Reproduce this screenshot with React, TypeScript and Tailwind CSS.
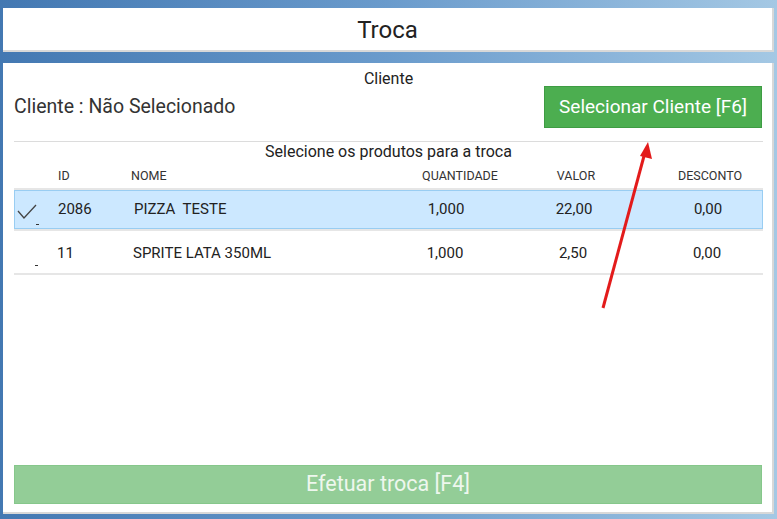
import React from "react";

type Item = { id: string; nome: string; qtd: string; valor: string; desc: string; selected?: boolean };

const items: Item[] = [
  { id: "2086", nome: "PIZZA\u00a0 TESTE", qtd: "1,000", valor: "22,00", desc: "0,00", selected: true },
  { id: "11", nome: "SPRITE LATA 350ML", qtd: "1,000", valor: "2,50", desc: "0,00" },
];

function Check() {
  return (
    <svg width="22" height="18" viewBox="0 0 22 18" className="absolute left-[2px] top-[13px]">
      <path d="M1 7 L7 14 L19 1" fill="none" stroke="#444" strokeWidth="1.3" />
    </svg>
  );
}

function Row({ item }: { item: Item }) {
  return (
    <div
      className={
        item.selected
          ? "relative flex h-[39px] items-center border border-[#99cdf2] bg-[#cce8ff] text-[15px] text-[#222]"
          : "relative flex h-[44px] items-center border-b-2 border-[#e6e6e6] pt-[2px] text-[15px] text-[#222]"
      }
    >
      {item.selected && <Check />}
      <span className={item.selected ? "absolute left-[21px] bottom-[3px] h-px w-[3px] bg-[#333]" : "absolute left-[21px] bottom-[7px] h-px w-[3px] bg-[#333]"} />
      <div className="w-[43px] shrink-0" />
      <div className="w-[76px] shrink-0">{item.id}</div>
      <div className="w-[274px] shrink-0">{item.nome}</div>
      <div className="w-[76px] shrink-0 text-center">{item.qtd}</div>
      <div className="w-[180px] shrink-0 text-center">{item.valor}</div>
      <div className="w-[88px] shrink-0 text-center">{item.desc}</div>
    </div>
  );
}

export default function App() {
  return (
    <div
      className="relative flex h-[519px] w-[777px] flex-col gap-[11px] overflow-hidden bg-gradient-to-r from-[#4378b2] via-[#6a9bcc] to-[#a4c8e4] px-[3px] pt-[8px] pb-[5px]"
      style={{ fontFamily: "Roboto, 'Liberation Sans', sans-serif" }}
    >
      <div className="flex h-[44px] items-center justify-center border-r-2 border-b-2 border-[#d8d8d8] bg-white pt-[2px] text-[24px] text-[#222]">
        Troca
      </div>

      <div className="flex flex-1 flex-col border-r-2 border-b-2 border-[#d8d8d8] bg-white pl-[11px] pr-[9px] pb-[8px] pt-[8px]">
        <div className="h-[15px] text-center text-[16px] leading-[15px] text-[#222]">Cliente</div>
        <div className="flex h-[42px] items-center justify-between">
          <span className="text-[19.5px] text-[#333]">Cliente : Não Selecionado</span>
          <button className="mr-[1px] h-[42px] w-[218px] border border-[#3e9c43] bg-[#4cae50] text-[19px] text-white">
            Selecionar Cliente [F6]
          </button>
        </div>

        <div className="mt-[13px] border-t border-[#dcdcdc]" />
        <div className="h-[20px] text-center text-[16px] leading-[20px] text-[#222]">
          Selecione os produtos para a troca
        </div>

        <div className="flex h-[28px] items-center border-b-2 border-[#e6e6e6] pt-[3px] text-[12.5px] text-[#333]">
          <div className="w-[44px] shrink-0" />
          <div className="w-[73px] shrink-0">ID</div>
          <div className="w-[290px] shrink-0">NOME</div>
          <div className="w-[78px] shrink-0 text-center">QUANTIDADE</div>
          <div className="w-[56px] shrink-0" />
          <div className="w-[42px] shrink-0 text-center">VALOR</div>
          <div className="w-[79px] shrink-0" />
          <div className="w-[68px] shrink-0 text-center">DESCONTO</div>
        </div>

        <Row item={items[0]} />
        <div className="h-[2px] bg-[#e6e6e6]" />
        <Row item={items[1]} />

        <button className="mt-auto h-[39px] w-[748px] border border-[#86c78b] bg-[#93cd97] text-[21.5px] text-[#eef7ee]">
          Efetuar troca [F4]
        </button>
      </div>

      <svg className="pointer-events-none absolute left-0 top-0" width="777" height="519">
        <line x1="603" y1="308" x2="644" y2="156" stroke="#e31b1b" strokeWidth="3" />
        <polygon points="648,142 652,159 640,156" fill="#e31b1b" />
      </svg>
    </div>
  );
}
